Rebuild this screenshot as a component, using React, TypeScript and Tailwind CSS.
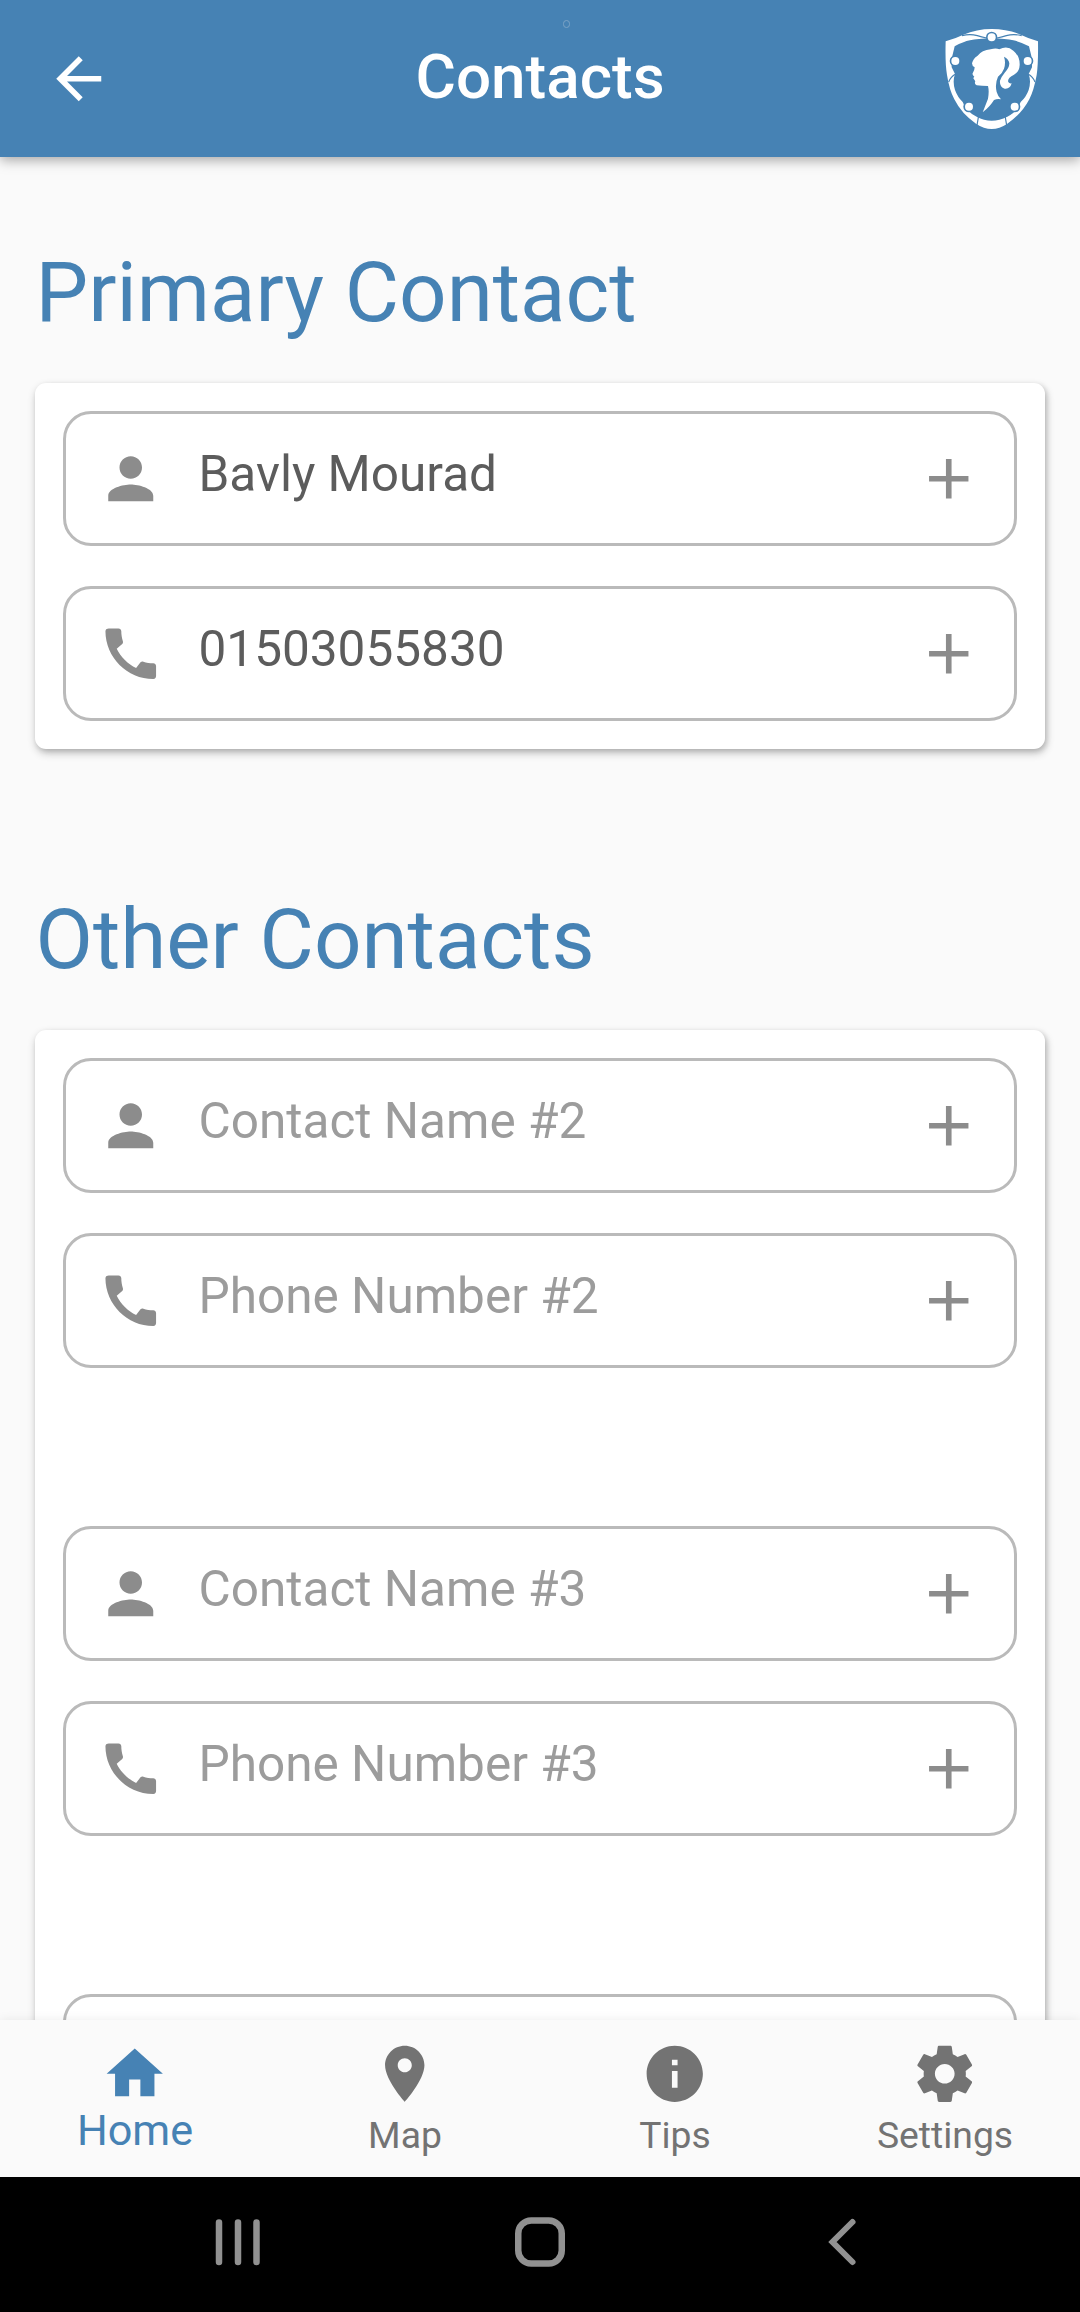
import React from "react";

const PERSON =
  "M12 12c2.21 0 4-1.79 4-4s-1.79-4-4-4-4 1.79-4 4 1.79 4 4 4zm0 2c-2.67 0-8 1.34-8 4v2h16v-2c0-2.66-5.33-4-8-4z";
const PHONE =
  "M20.01 15.38c-1.23 0-2.42-.2-3.53-.56-.35-.12-.74-.03-1.01.24l-1.57 1.97c-2.83-1.35-5.48-3.9-6.89-6.83l1.95-1.66c.27-.28.35-.67.24-1.02-.37-1.11-.56-2.3-.56-3.53 0-.54-.45-.99-.99-.99H4.19C3.65 3 3 3.24 3 3.99 3 13.28 10.73 21 20.01 21c.71 0 .99-.63.99-1.18v-3.45c0-.54-.45-.99-.99-.99z";
const PLUS = "M19 13h-6v6h-2v-6H5v-2h6V5h2v6h6v2z";
const BACK = "M20 11H7.83l5.59-5.59L12 4l-8 8 8 8 1.41-1.41L7.83 13H20v-2z";
const HOME = "M10 20v-6h4v6h5v-8h3L12 3 2 12h3v8z";
const PLACE =
  "M12 2C8.13 2 5 5.13 5 9c0 5.25 7 13 7 13s7-7.75 7-13c0-3.87-3.13-7-7-7zm0 9.5c-1.38 0-2.5-1.12-2.5-2.5s1.12-2.5 2.5-2.5 2.5 1.12 2.5 2.5-1.12 2.5-2.5 2.5z";
const INFO =
  "M12 2C6.48 2 2 6.48 2 12s4.48 10 10 10 10-4.48 10-10S17.52 2 12 2zm1 15h-2v-6h2v6zm0-8h-2V7h2v2z";
const GEAR =
  "M19.43 12.98c.04-.32.07-.64.07-.98s-.03-.66-.07-.98l2.11-1.65c.19-.15.24-.42.12-.64l-2-3.46c-.12-.22-.39-.3-.61-.22l-2.49 1c-.52-.4-1.08-.73-1.69-.98l-.38-2.65C14.46 2.18 14.25 2 14 2h-4c-.25 0-.46.18-.49.42l-.38 2.65c-.61.25-1.17.59-1.69.98l-2.49-1c-.23-.09-.49 0-.61.22l-2 3.46c-.13.22-.07.49.12.64l2.11 1.65c-.04.32-.07.65-.07.98s.03.66.07.98l-2.11 1.65c-.19.15-.24.42-.12.64l2 3.46c.12.22.39.3.61.22l2.49-1c.52.4 1.08.73 1.69.98l.38 2.65c.03.24.24.42.49.42h4c.25 0 .46-.18.49-.42l.38-2.65c.61-.25 1.17-.59 1.69-.98l2.49 1c.23.09.49 0 .61-.22l2-3.46c.12-.22.07-.49-.12-.64l-2.11-1.65zM12 15.5c-1.93 0-3.5-1.57-3.5-3.5s1.57-3.5 3.5-3.5 3.5 1.57 3.5 3.5-1.57 3.5-3.5 3.5z";

function Icon({ d }: { d: string }) {
  return (
    <svg viewBox="0 0 24 24" fill="currentColor" className="h-[67.5px] w-[67.5px] shrink-0">
      <path d={d} />
    </svg>
  );
}

const DOTS = [
  [215, 82],
  [106, 153],
  [323, 153],
  [147, 290],
  [284, 290],
];

function ShieldLogo() {
  return (
    <svg viewBox="0 0 420 390" className="h-[130px] w-[140px] shrink-0">
      <path
        fill="#fff"
        d="M77 94Q105 86 130 74Q170 57 215 57Q262 57 302 74Q327 86 354 94Q355 160 350 195Q342 240 328 268Q305 312 262 341Q238 357 215 357Q192 357 168 341Q125 312 103 268Q88 240 81 195Q75 160 77 94Z"
      />
      <path
        fill="#4682b4"
        d="M104 109Q130 95 150 91Q172 86 215 84Q258 86 280 91Q300 95 327 109Q337 140 336 172L326 192Q334 215 326 240Q318 262 302 276Q292 305 262 320Q238 332 215 332Q192 332 170 320Q138 305 128 276Q113 262 105 240Q97 215 105 192L95 172Q94 140 104 109Z"
      />
      <g fill="none" stroke="#4682b4" strokeWidth="3.5">
        <path d="M126 77Q150 71 172 77Q184 81 200 84M305 77Q281 71 259 77Q247 81 231 84" />
        <path d="M86 216Q92 200 107 192M345 216Q339 200 324 192" />
        <path d="M171 346L176 316M260 346L255 316" />
      </g>
      {DOTS.map(([x, y]) => (
        <g key={`${x}-${y}`}>
          <circle cx={x} cy={y} r="17" fill="#4682b4" />
          <circle cx={x} cy={y} r="12" fill="#fff" />
        </g>
      ))}
      <path
        fill="#fff"
        d="M156 160Q160 145 172 138Q186 120 212 118Q228 113 238 118Q262 106 280 122Q300 138 299 165Q298 186 282 194Q264 202 264 214Q266 222 275 220Q270 238 254 236Q238 232 240 212Q244 200 254 188Q268 174 268 160Q266 146 252 140Q258 158 252 176Q246 192 234 200Q224 222 230 246Q234 260 243 268Q232 266 222 270Q210 290 188 307Q194 292 204 266Q208 244 204 228Q186 228 170 226Q162 222 166 214L162 208Q158 204 163 200Q156 194 158 190Q164 180 164 172Q156 168 156 160Z"
      />
    </svg>
  );
}

const FIELD_BOX = "flex h-[135px] shrink-0 items-center rounded-[28px] border-3 border-[#bababa] pr-[31.5px] pl-[31px] text-[#8c8c8c]";

function Field({ icon, text, filled = false }: { icon: string; text: string; filled?: boolean }) {
  return (
    <div className={FIELD_BOX}>
      <Icon d={icon} />
      <span
        className={
          filled
            ? "ml-[34px] grow pb-[9px] text-[49.5px] leading-[60px] text-[#5c5c5c]"
            : "ml-[34px] grow pb-[9px] text-[49.5px] leading-[60px] text-[#9c9c9c]"
        }
      >
        {text}
      </span>
      <Icon d={PLUS} />
    </div>
  );
}

function Pair({ name, phone, filled }: { name: string; phone: string; filled?: boolean }) {
  return (
    <div className="flex shrink-0 flex-col gap-10">
      <Field icon={PERSON} text={name} filled={filled} />
      <Field icon={PHONE} text={phone} filled={filled} />
    </div>
  );
}

function Tab({ icon, label, active = false }: { icon: string; label: string; active?: boolean }) {
  return (
    <div
      className={
        active
          ? "flex flex-1 flex-col items-center pt-[19.5px] text-[#4682b4]"
          : "flex flex-1 flex-col items-center pt-[19.5px] text-[#737373]"
      }
    >
      <Icon d={icon} />
      <span
        className={
          active
            ? "-mt-px text-[43.2px] leading-[50px]"
            : "mt-[3px] text-[37.3px] leading-[50px]"
        }
      >
        {label}
      </span>
    </div>
  );
}

const CARD =
  "mx-[35px] rounded-[11px] bg-white px-7 pt-7 shadow-[1px_4px_8px_rgba(0,0,0,0.24),2px_2px_5px_rgba(0,0,0,0.12)]";

export default function App() {
  return (
    <div className="flex h-[2312px] w-[1080px] flex-col overflow-hidden bg-[#fafafa] font-['Roboto',sans-serif]">
      <header className="relative z-10 flex h-[157px] shrink-0 items-center justify-between bg-[#4682b4] pr-5 pl-[45px] text-white shadow-[0_3px_12px_rgba(0,0,0,0.35)]">
        <div className="flex w-[140px]">
          <Icon d={BACK} />
        </div>
        <h1 className="mr-[25px] pb-[3px] text-[62px] leading-[72px] font-medium">Contacts</h1>
        <div className="flex h-[157px] items-start pt-[10px]">
          <ShieldLogo />
        </div>
        <span className="absolute top-5 left-[563px] h-2 w-[7px] rounded-full border border-[#7ba3c6]" />
      </header>

      <main className="flex min-h-0 grow flex-col overflow-hidden">
        <h2 className="mt-[86px] shrink-0 pl-[35.5px] text-[83.5px] leading-[100px] text-[#4682b4]">Primary Contact</h2>
        <section className={`${CARD} mt-10 h-[366px] shrink-0`}>
          <Pair name="Bavly Mourad" phone="01503055830" filled />
        </section>
        <h2 className="mt-[141px] shrink-0 pl-[35.5px] text-[83.5px] leading-[100px] text-[#4682b4]">Other Contacts</h2>
        <section className={`${CARD} mt-10 flex shrink-0 flex-col gap-[158px]`}>
          <Pair name="Contact Name #2" phone="Phone Number #2" />
          <Pair name="Contact Name #3" phone="Phone Number #3" />
          <div className={FIELD_BOX} />
        </section>
      </main>

      <nav className="relative z-10 flex h-[157px] shrink-0 bg-[#fafafa] shadow-[0_0_10px_rgba(0,0,0,0.08)]">
        <Tab icon={HOME} label="Home" active />
        <Tab icon={PLACE} label="Map" />
        <Tab icon={INFO} label="Tips" />
        <Tab icon={GEAR} label="Settings" />
      </nav>

      <footer className="relative z-10 flex h-[135px] shrink-0 items-center justify-between bg-black px-[213px] pb-[5px]">
        <svg viewBox="0 0 50 50" className="h-[50px] w-[50px]" stroke="#919191" strokeWidth="6.5" strokeLinecap="round">
          <path d="M6 5.5v39.5M25 5.5v39.5M43.5 5.5v39.5" />
        </svg>
        <svg viewBox="0 0 50 50" className="h-[50px] w-[50px]" stroke="#919191" strokeWidth="6.5" fill="none">
          <rect x="3.25" y="3.5" width="43.5" height="43" rx="13" />
        </svg>
        <svg viewBox="0 0 50 50" className="h-[50px] w-[50px]" stroke="#919191" strokeWidth="6" strokeLinecap="round" fill="none">
          <path d="M35.5 5L15.5 25L35.5 45" />
        </svg>
      </footer>
    </div>
  );
}
